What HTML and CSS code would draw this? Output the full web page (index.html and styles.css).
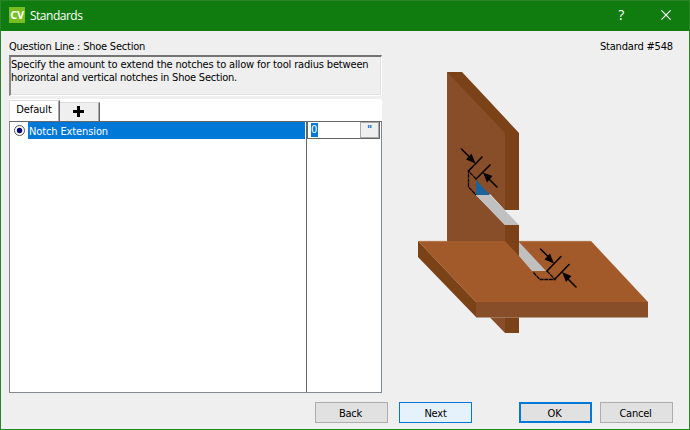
FILE: index.html
```html
<!DOCTYPE html>
<html lang="en">
<head>
<meta charset="utf-8">
<title>Standards</title>
<link rel="stylesheet" href="styles.css">
</head>
<body>
<div class="window">
  <header class="titlebar">
    <span class="logo">CV</span>
    <span class="title">Standards</span>
    <span class="help">?</span>
    <svg class="close" width="10" height="10" viewBox="0 0 10 10"><path d="M.4.4l9.2 9.2M9.6.4L.4 9.6" stroke="#fff" stroke-width="1.200" fill="none"/></svg>
  </header>
  <main class="content">
    <section class="left">
      <div class="question">Question Line : Shoe Section</div>
      <div class="description"><div class="line-wide">Specify the amount to extend the notches to allow for tool radius between</div><div>horizontal and vertical notches in Shoe Section.</div></div>
      <nav class="tabs">
        <div class="tab active">Default</div>
        <div class="tab add"><svg width="11" height="11" viewBox="0 0 11 11"><path d="M5.500 0v11M0 5.500h11" stroke="#000" stroke-width="3"/></svg></div>
      </nav>
      <div class="grid">
        <div class="names">
          <div class="row">
            <svg class="radio" width="11" height="11" viewBox="0 0 11 11"><circle cx="5.500" cy="5.500" r="5" fill="#fff" stroke="#555"/><circle cx="5.500" cy="5.500" r="2.700" fill="#000080"/></svg>
            <div class="selected">Notch Extension</div>
          </div>
        </div>
        <div class="values">
          <div class="field"><span class="value">0</span><span class="unit">"</span></div>
        </div>
      </div>
    </section>
    <aside class="right">
      <div class="number">Standard #548</div>
      <svg class="drawing" width="250" height="280" viewBox="410 60 250 280">
        <path fill="#7b4218" d="M447 72h15l57 61v77h-14l-14-16z"/>
        <path fill="#874e29" d="M447 72l58 61v77l-15-16-14 1 29 30v17h-58z"/>
        <path fill="#a35a2a" d="M418 241h173l57 61H476z"/>
        <path fill="#7b4218" d="M418 241l58 61v15l-58-60z"/>
        <path fill="#874e29" d="M476 302h172v15.500H476z"/>
        <path fill="#874e29" d="M490 317.500h15V333z"/>
        <path fill="#7b4218" d="M505 317.500h14V333h-14z"/>
        <path fill="#7b4218" d="M505 225h14v31l-14-15z"/>
        <path fill="#c0c0c0" d="M476 195h14l29 30h-14zM519 242l27 29h-14l-13-15z"/>
        <path fill="#1c639b" d="M476 180v15h14z"/>
        <path d="M447.500 241.300H418.500M519 241.300h72" stroke="#bd8d6c" stroke-width=".7"/>
        <g fill="none" stroke="#080400" stroke-width="1.600">
          <path stroke-width="1.300" stroke-dasharray="4 .6" d="M476 179l-7.500-8v16l7.500 8M547 271l8 8.500h-15l-7-7.500"/>
          <path stroke-linecap="round" d="M461.500 149l10 10M482 157l-13.500 14M490 165l-14 14M497 187l-10-10M540.500 249l10 10M561 256.500l-14 14.500M569 264.500l-14 14.500M576 287l-10-10"/>
        </g>
        <path fill="#080400" d="M475.500 163.500l-9.500-4 5.500-6zM483 172.500l9.500 3.500-5.500 6.500zM554 263.500l-9.500-4 5.500-6zM562 272l9.500 4-5.500 6z"/>
      </svg>
    </aside>
  </main>
  <footer class="buttons">
    <button class="btn back">Back</button>
    <button class="btn next">Next</button>
    <button class="btn ok">OK</button>
    <button class="btn cancel">Cancel</button>
  </footer>
</div>
</body>
</html>
```
FILE: styles.css
```css
* { box-sizing: border-box; }
body {
  margin: 0;
  font-family: "DejaVu Sans Condensed", "DejaVu Sans", sans-serif;
  font-stretch: condensed;
  font-size: 11px;
  line-height: 13px;
  letter-spacing: -.22px;
  color: #000;
}
.window {
  width: 690px;
  height: 430px;
  display: flex;
  flex-direction: column;
  background: #efefef;
  border: 1px solid #2a8527;
}
.titlebar {
  height: 30px;
  flex: none;
  display: flex;
  align-items: center;
  padding: 0 18px 2px 8px;
  background: #107c10;
  color: #fff;
}
.logo {
  width: 16px;
  height: 16px;
  background: #78be20;
  font: bold 11px/16px "Open Sans", sans-serif;
  text-align: center;
  letter-spacing: -.3px;
}
.title { margin-left: 5px; flex: 1; font: 12px/16px "Open Sans", sans-serif; letter-spacing: -.5px; padding-top: 1px; }
.help { font: 14px/16px "Open Sans", sans-serif; margin-right: 37px; }
.close { display: block; }
.content { display: flex; height: 362px; flex: none; }
.left { width: 374px; margin-left: 8px; }
.question { height: 24px; padding-top: 9px; }
.description {
  height: 41px;
  width: 373px;
  border: 1px solid #fff;
  border-top: 2px solid #747474;
  border-left: 2px solid #888;
  box-shadow: inset -1px -1px #e2e2e2;
  padding-top: 1px;
  white-space: nowrap;
}
.line-wide { letter-spacing: -.16px; }
.tabs {
  height: 22px;
  width: 373px;
  margin-top: 3px;
  display: flex;
  align-items: flex-end;
  background: #fff;
}
.tab {
  height: 19px;
  border-right: 1px solid #666;
  background: #efefef;
  display: flex;
  align-items: center;
  justify-content: center;
}
.tab.active {
  width: 51px;
  height: 21px;
  background: #fff;
  border-top: 1px solid #ddd;
  border-left: 1px solid #ddd;
  padding: 0 1px 3px 0;
  box-shadow: inset -1px 0 #aaa;
  letter-spacing: -.1px;
}
.tab.add { width: 40px; border-top: 1px solid #ddd; box-shadow: inset -1px 0 #aaa; padding: 0 2px 2px 0; }
.grid {
  height: 272px;
  width: 373px;
  display: flex;
  border: 1px solid #828790;
  border-top-color: #666;
  background: #fff;
}
.names { width: 297px; border-right: 1px solid #666; }
.row { display: flex; align-items: center; height: 17px; padding: 0 1px 0 4px; }
.radio { margin-right: 3px; }
.selected { flex: 1; height: 17px; background: #0078d7; color: #fff; padding: 3px 0 0 1px; letter-spacing: -.12px; }
.values { flex: 1; }
.field { display: flex; justify-content: space-between; height: 17px; width: 73px; border: 1px solid #666; border-top: 0; padding-left: 3px; }
.value { margin-top: 1px; width: 7px; height: 14px; background: #0078d7; color: #fff; line-height: 14px; }
.unit {
  width: 19px;
  border: 1px solid #aaa;
  background: #efefef;
  color: #0068b8;
  font-weight: bold;
  text-align: center;
}
.right { flex: 1; display: flex; flex-direction: column; }
.number { height: 29px; padding: 9px 16px 0 0; text-align: right; letter-spacing: -.17px; }
.drawing { display: block; margin-left: 27px; }
.buttons { display: flex; padding: 9px 0 0 314px; }
.btn {
  width: 73px;
  height: 21px;
  margin-right: 11px;
  padding: 1px 2px 0 0;
  border: 1px solid #adadad;
  background: #e1e1e1;
  color: #000;
  font: inherit;
  letter-spacing: -.22px;
}
.btn.next { margin-right: 47px; padding-right: 0; background: #e5f1fb; border-color: #0078d7; }
.btn.ok { margin-right: 8px; border: 2px solid #0078d7; }
.btn.cancel { margin-right: 0; }
```
